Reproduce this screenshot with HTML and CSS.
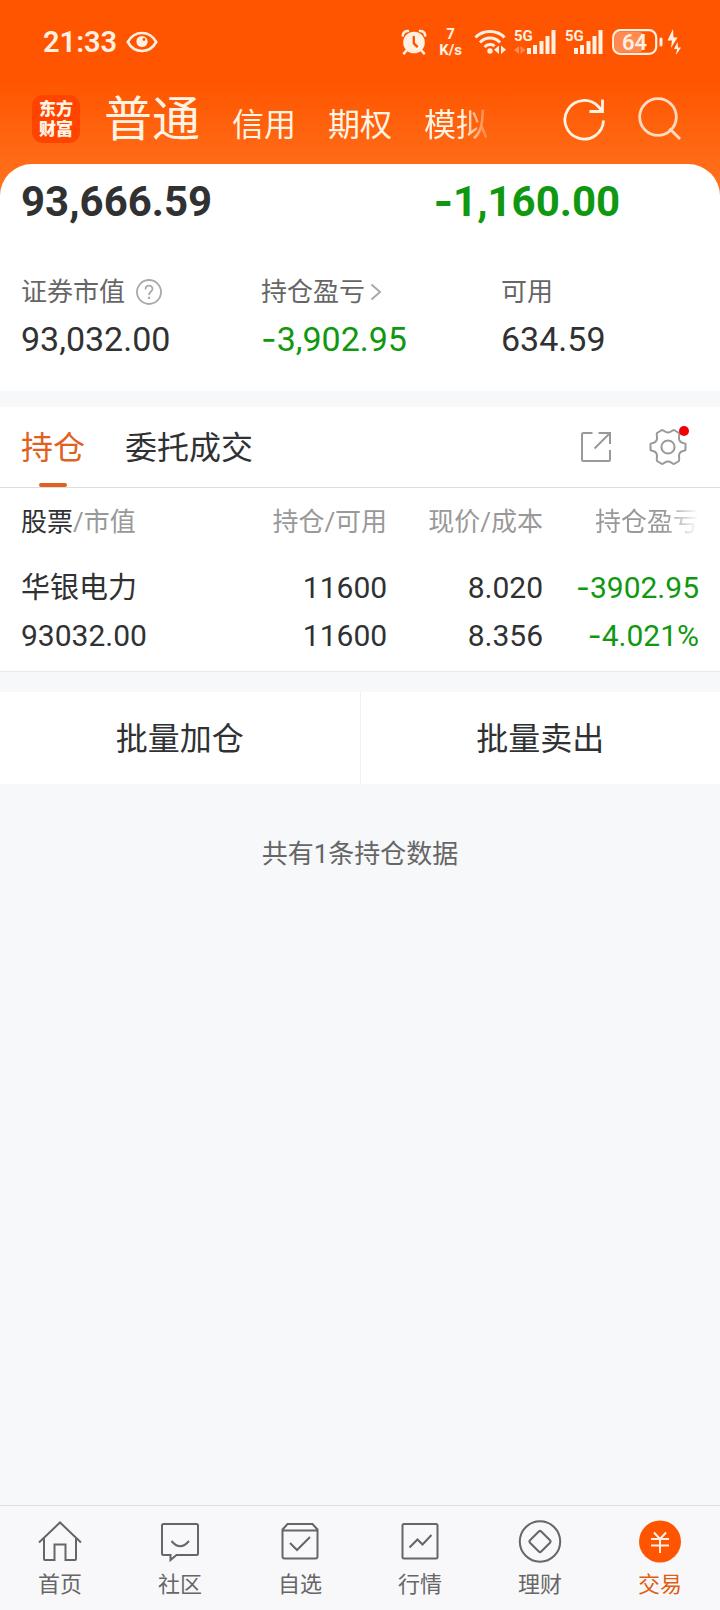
FILE: index.html
```html
<!DOCTYPE html>
<html lang="zh-CN">
<head>
<meta charset="utf-8">
<meta name="viewport" content="width=device-width, initial-scale=1">
<title>交易 - 持仓</title>
<link rel="stylesheet" href="styles.css">
</head>
<body>
<div class="app">
  <div class="hero">
    <div class="status">
      <span class="clock">21:33</span>
      <svg class="eye" width="32" height="22" viewBox="0 0 32 22" fill="none" stroke="currentColor" stroke-width="2.6"><path d="M1.8 11C8.500 -1 23.500 -1 30.200 11C23.500 23 8.500 23 1.800 11Z"/><circle cx="16" cy="10.500" r="5.600" fill="currentColor" stroke="none"/><circle cx="18" cy="8.500" r="1.400" fill="#ff5500" stroke="none"/></svg>
      <div class="status-icons">
        <svg width="26" height="26" viewBox="0 0 26 26" fill="none" stroke="currentColor" stroke-linecap="round"><circle cx="13" cy="13.500" r="10.800" fill="currentColor" stroke="none"/><path d="M1.800 6.500C2 3.500 4.500 1.800 7 2M24.200 6.500C24 3.500 21.500 1.800 19 2M5.500 21.500L3 24.300M20.500 21.500L23 24.300" stroke-width="2.600"/><path d="M12.800 8V14.500L16 17.500" stroke="#ff5500" stroke-width="2.400"/></svg>
        <div class="speed"><span>7</span><span>K/s</span></div>
        <svg width="32" height="26" viewBox="0 0 32 26" fill="none" stroke="currentColor" stroke-width="3"><path d="M1.500 8.500C9 .500 23 .500 30.500 8.500M6 13.500C11.500 7.500 20.500 7.500 26 13.500M10.500 18C13.500 14.800 18.500 14.800 20.500 17.200"/><circle cx="16" cy="22" r="2.700" fill="currentColor" stroke="none"/><path d="M25 16.500V25L20 20.800ZM27 16.500V25L32 20.800Z" fill="currentColor" stroke="none"/></svg>
        <svg class="signal" width="43" height="34" viewBox="0 -4 43 34" fill="currentColor"><text x="0" y="12">5G</text><path d="M5 17V25L0 21ZM6.500 17V25L11.500 21Z" opacity=".35"/><path d="M13 19h4v6h-4ZM19 16h4v9h-4ZM25.500 12h4v13h-4ZM31.500 7h4v18h-4ZM37.500 1h4v24h-4Z"/></svg>
        <svg class="signal" width="39" height="34" viewBox="0 -4 39 34" fill="currentColor"><text x="0" y="12">5G</text><path d="M9 19h4v6H9ZM15 16h4v9h-4ZM21.500 12h4v13h-4ZM27.500 7h4v18h-4ZM33.500 1h4v24h-4Z"/></svg>
        <svg class="battery" width="70" height="26" viewBox="0 0 70 26" fill="currentColor"><rect x="3" y="3" width="28" height="20" rx="4" opacity=".35"/><rect x="1.200" y="1.200" width="43" height="23.600" rx="7" fill="none" stroke="currentColor" stroke-width="2.200"/><rect x="47.500" y="8.500" width="3" height="9" rx="1.500"/><text x="22.500" y="20.500" text-anchor="middle">64</text><path d="M61 0L55.500 11.500H60L59 19L65.500 8.500H61.500ZM65.500 13L62 20H65L64 26L69 18.500H66Z"/></svg>
      </div>
    </div>
    <header class="topbar">
      <div class="logo"><span>东方</span><span>财富</span></div>
      <nav class="accounts">
        <a class="account account-on" href="#">普通</a>
        <a class="account" href="#">信用</a>
        <a class="account" href="#">期权</a>
        <a class="account account-fade" href="#">模拟</a>
      </nav>
      <button class="icon-btn" aria-label="刷新"><svg width="44" height="44" viewBox="0 0 44 44" fill="none" stroke="currentColor" stroke-width="2.800"><path d="M41.500 23.500A19.300 19.300 0 1 1 36.500 9.800L40 13.500M40.500 2.500V14.500H27.500"/></svg></button>
      <button class="icon-btn icon-search" aria-label="搜索"><svg width="44" height="44" viewBox="0 0 44 44" fill="none" stroke="currentColor" stroke-width="2.800"><circle cx="20" cy="20" r="18.300"/><path d="M31.500 31.500L42 42"/></svg></button>
    </header>
    <section class="summary">
      <div class="totals">
        <strong class="total">93,666.59</strong>
        <strong class="total down"><span class="sign">-</span>1,160.00</strong>
      </div>
      <dl class="stats">
        <div class="stat">
          <dt>证券市值<svg class="help" width="28" height="28" viewBox="0 0 28 28" fill="none" stroke="currentColor" stroke-width="1.800"><circle cx="14" cy="14" r="12"/><path d="M10.500 11.500C10.500 6.500 17.500 6.500 17.500 11C17.500 13.500 14 13.500 14 17"/><path d="M14 18.800V21" stroke-width="2.200"/></svg></dt>
          <dd>93,032.00</dd>
        </div>
        <div class="stat">
          <dt>持仓盈亏<svg class="chevron" width="12" height="18" viewBox="0 0 12 18" fill="none" stroke="currentColor" stroke-width="2"><path d="M1.500 1.500L10 9L1.500 16.500"/></svg></dt>
          <dd class="down"><span class="sign">-</span>3,902.95</dd>
        </div>
        <div class="stat">
          <dt>可用</dt>
          <dd>634.59</dd>
        </div>
      </dl>
    </section>
  </div>

  <section class="holdings">
    <div class="tabs">
      <button class="tab tab-on">持仓</button>
      <button class="tab">委托成交</button>
      <button class="tool" aria-label="分享"><svg width="32" height="32" viewBox="0 0 32 32" fill="none" stroke="currentColor" stroke-width="2"><path d="M12.500 2H3.500Q2 2 2 3.500V28.500Q2 30 3.500 30H28.500Q30 30 30 28.500V19M18.500 2H30V13M30 2L14.500 17.500"/></svg></button>
      <button class="tool" aria-label="设置"><svg width="38" height="38" viewBox="0 0 38 38" fill="none" stroke="currentColor" stroke-width="2" stroke-linejoin="round"><circle cx="19" cy="19" r="6.600"/><path d="M13 2C15.500 2.500 16 4.500 19 4.500S22.500 2.500 25 2L30 5C31 8 29 9.500 30.500 12.500S34 14.500 36.500 15.800V22.200C34 23.500 32 22.500 30.500 25.500S31 30 30 33L25 36C22.500 35.500 22 33.500 19 33.500S15.500 35.500 13 36L8 33C7 30 9 28.500 7.500 25.500S4 23.500 1.500 22.200V15.800C4 14.500 6 15.500 7.500 12.500S7 8 8 5Z"/></svg><i class="dot"></i></button>
    </div>
    <table class="table">
      <thead>
        <tr>
          <th scope="col"><b>股票</b>/市值</th>
          <th scope="col">持仓/可用</th>
          <th scope="col">现价/成本</th>
          <th scope="col" class="th-fade">持仓盈亏</th>
        </tr>
      </thead>
      <tbody>
        <tr>
          <td><div class="name">华银电力</div><div>93032.00</div></td>
          <td><div>11600</div><div>11600</div></td>
          <td><div>8.020</div><div>8.356</div></td>
          <td class="down"><div><span class="sign">-</span>3902.95</div><div><span class="sign">-</span>4.021%</div></td>
        </tr>
      </tbody>
    </table>
  </section>

  <div class="batch">
    <button class="batch-btn">批量加仓</button>
    <button class="batch-btn">批量卖出</button>
  </div>
  <p class="count">共有1条持仓数据</p>

  <nav class="tabbar">
    <a class="item" href="#"><svg width="44" height="44" viewBox="0 0 44 44"><path d="M1 22.500L22 2.500L43 22.500M6 18.500V39Q6 40 7 40H16.500V24.500H27.500V40H37Q38 40 38 39V18.500"/></svg>首页</a>
    <a class="item" href="#"><svg width="44" height="44" viewBox="0 0 44 44"><path d="M5.500 4H38.500Q40 4 40 5.500V33.500Q40 35 38.500 35H18.500L12.500 40V35H5.500Q4 35 4 33.500V5.500Q4 4 5.500 4Z"/><path d="M13.500 21Q22 31.500 31 21"/></svg>社区</a>
    <a class="item" href="#"><svg width="44" height="44" viewBox="0 0 44 44"><path d="M4.500 9.500L9.500 4H34.500L39.500 9.500V36.500Q39.500 38.500 37.500 38.500H6.500Q4.500 38.500 4.500 36.500ZM4.500 10.500H39.500M12 23L19 30L32 17"/></svg>自选</a>
    <a class="item" href="#"><svg width="44" height="44" viewBox="0 0 44 44"><rect x="4.500" y="4" width="35" height="34.500" rx="1.500"/><path d="M11.500 27.500L19.500 19.500L24.500 24.500L33.500 15"/></svg>行情</a>
    <a class="item" href="#"><svg width="44" height="44" viewBox="0 0 44 44"><circle cx="22" cy="21.500" r="20.200"/><path d="M20.800 11.500Q22 10.300 23.200 11.500L32 20.300Q33.200 21.500 32 22.700L23.200 31.500Q22 32.700 20.800 31.500L12 22.700Q10.800 21.500 12 20.300Z"/></svg>理财</a>
    <a class="item item-on" href="#"><svg width="44" height="44" viewBox="0 0 44 44"><circle class="coin" cx="22" cy="21.500" r="21"/><path class="yen" d="M16 12.500L22 19L28 12.500M13 19H31M13 25.500H31M22 19V33"/></svg>交易</a>
  </nav>
</div>
</body>
</html>
```
FILE: styles.css
```css
* {
  box-sizing: border-box;
}

body {
  margin: 0;
  background: #f7f8fa;
  color: #303133;
  font-family: Roboto, "Noto Sans CJK SC", sans-serif;
}

button {
  margin: 0;
  padding: 0;
  border: 0;
  background: none;
  color: inherit;
  font: inherit;
  cursor: pointer;
}

a {
  color: inherit;
  text-decoration: none;
}

svg {
  display: block;
  flex: none;
}

.app {
  display: flex;
  flex-direction: column;
  min-height: 100vh;
}

.hero {
  background: linear-gradient(#ff5500 80px, #ff7420 196px);
}

.status {
  display: flex;
  align-items: center;
  height: 84px;
  padding: 0 38px 0 43px;
  color: #fff0e2;
}

.clock {
  font-size: 29px;
  font-weight: 600;
}

.eye {
  margin-left: 9px;
}

.status-icons {
  display: flex;
  align-items: center;
  gap: 8px;
  margin-left: auto;
}

.speed {
  display: flex;
  flex-direction: column;
  align-items: center;
  margin: 0 4px;
  font-size: 15px;
  font-weight: 700;
  line-height: 16px;
}

.signal {
  font-size: 15px;
  font-weight: 700;
}

.battery {
  font-size: 22px;
  font-weight: 600;
}

.topbar {
  display: flex;
  align-items: center;
  height: 80px;
  padding: 0 38px 10px 32px;
  color: #fff3e4;
}

.logo {
  display: flex;
  flex-direction: column;
  align-items: center;
  justify-content: center;
  width: 48px;
  height: 48px;
  border-radius: 11px;
  background: #ff4400;
  font-size: 17px;
  font-weight: 800;
  line-height: 20px;
}

.accounts {
  display: flex;
  flex: 1;
  align-items: baseline;
  gap: 32px;
  padding: 6px 0 0 24px;
  white-space: nowrap;
}

.account {
  font-size: 32px;
  line-height: 56px;
}

.account-on {
  font-size: 48px;
}

.account-fade {
  mask-image: linear-gradient(90deg, #000 60%, transparent 110%);
}

.icon-search {
  margin-left: 32px;
  color: #ffdcc0;
}

.summary {
  padding: 13px 0 28px 21px;
  border-radius: 32px 32px 0 0;
  background: #fff;
}

.totals {
  display: grid;
  grid-template-columns: 59% 41%;
}

.total {
  font-size: 42px;
  line-height: 50px;
}

.down {
  color: #109810;
}

.sign {
  font-family: Inter, sans-serif;
  line-height: 1;
}

.stats {
  display: grid;
  grid-template-columns: 240px 240px 1fr;
  margin: 45px 0 0;
}

.stat dt {
  display: flex;
  align-items: center;
  color: #666;
  font-size: 26px;
  line-height: 40px;
}

.stat dd {
  margin: 3px 0 0;
  font-size: 34px;
  line-height: 48px;
}

.help {
  margin-left: 10px;
  color: #aaa;
}

.chevron {
  margin-left: 5px;
  color: #aaa;
}

.holdings {
  margin-top: 16px;
  border-bottom: 1px solid #e8eaec;
  background: #fff;
}

.tabs {
  display: flex;
  align-items: center;
  height: 81px;
  padding: 0 33px 0 21px;
  border-bottom: 1px solid #ddd;
}

.tab {
  position: relative;
  height: 80px;
  margin-right: 40px;
  padding-bottom: 4px;
  font-size: 32px;
}

.tab-on {
  color: #e06020;
}

.tab-on::after {
  content: "";
  position: absolute;
  bottom: 0;
  left: calc(50% - 14px);
  width: 28px;
  height: 4px;
  border-radius: 2px;
  background: #e06020;
}

.tool {
  position: relative;
  margin-left: 37px;
  color: #999;
}

.tab + .tool {
  margin-left: auto;
}

.dot {
  position: absolute;
  top: -2px;
  right: -2px;
  width: 10px;
  height: 10px;
  border-radius: 50%;
  background: #f00000;
}

.table {
  width: 100%;
  padding: 0 21px 11px;
  border-spacing: 0;
  table-layout: fixed;
}

.table th,
.table td {
  padding: 0;
  text-align: right;
  white-space: nowrap;
}

.table th:first-child,
.table td:first-child {
  width: 31%;
  text-align: left;
}

.table th {
  height: 76px;
  padding-bottom: 14px;
  color: #999;
  font-size: 26px;
  font-weight: 400;
}

.table th b {
  color: #303133;
  font-weight: 400;
}

.table .th-fade {
  mask-image: linear-gradient(90deg, #000 78%, transparent);
}

.table td {
  font-size: 30px;
  line-height: 48px;
}

.table .name {
  font-size: 29px;
}

.batch {
  display: flex;
  margin-top: 20px;
  background: #fff;
}

.batch-btn {
  flex: 1;
  height: 92px;
  padding-bottom: 4px;
  font-size: 32px;
}

.batch-btn + .batch-btn {
  border-left: 1px solid #eff0f2;
}

.count {
  margin: 50px 0;
  color: #666;
  font-size: 26px;
  line-height: 40px;
  text-align: center;
}

.tabbar {
  display: flex;
  margin-top: auto;
  padding: 14px 0 8px;
  border-top: 1px solid #dfe1e3;
  background: #f8f8fa;
}

.item {
  display: flex;
  flex: 1;
  flex-direction: column;
  align-items: center;
  gap: 4px;
  color: #666;
  font-size: 22px;
  line-height: 34px;
}

.item svg {
  fill: none;
  stroke: currentColor;
  stroke-width: 2;
}

.item-on {
  color: #e35a10;
}

.item .coin {
  fill: #ff5500;
  stroke: none;
}

.item .yen {
  stroke: #fff0e2;
}
```
